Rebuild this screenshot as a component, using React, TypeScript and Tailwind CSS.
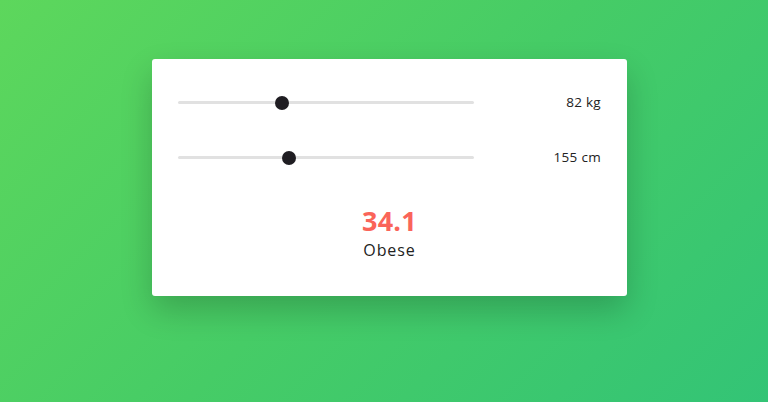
const ROWS = [
  { label: '82 kg', value: 82, min: 40, max: 160 },
  { label: '155 cm', value: 155, min: 140, max: 180 },
];

function Slider({ value, min, max }: { value: number; min: number; max: number }) {
  const pct = ((value - min) / (max - min)) * 100;
  return (
    <div className="relative w-[296px] h-[14px] flex items-center">
      <div className="w-full h-[3px] rounded-full bg-[#e1e1e1]" />
      <div
        className="absolute top-[0.5px] w-[14px] h-[14px] -ml-[7px] rounded-full bg-[#1f1d22]"
        style={{ left: `${pct}%` }}
      />
    </div>
  );
}

export default function App() {
  return (
    <div
      className="w-[768px] h-[402px] overflow-hidden bg-[linear-gradient(135deg,#5dd75c_0%,#46cc66_50%,#33c476_100%)] pt-[59px] pl-[152px]"
      style={{ fontFamily: '"Open Sans", "Liberation Sans", sans-serif' }}
    >
      <div className="w-[475px] h-[237px] bg-white rounded-[3px] shadow-[0_14px_32px_rgba(0,0,0,0.2)] pt-[36px] px-[26px] flex flex-col">
        <div className="flex flex-col gap-[41px]">
          {ROWS.map((r) => (
            <div key={r.label} className="flex items-center justify-between h-[14px]">
              <Slider value={r.value} min={r.min} max={r.max} />
              <span className="text-[13.5px] text-[#222] tracking-[0.3px] pt-[1px]">{r.label}</span>
            </div>
          ))}
        </div>
        <div className="mt-[40px] flex flex-col items-center">
          <span className="text-[27px] leading-[33px] font-bold text-[#fa6459] tracking-[0.3px]">34.1</span>
          <span className="mt-[3px] text-[16px] leading-[20px] text-[#222] tracking-[0.9px]">Obese</span>
        </div>
      </div>
    </div>
  );
}
